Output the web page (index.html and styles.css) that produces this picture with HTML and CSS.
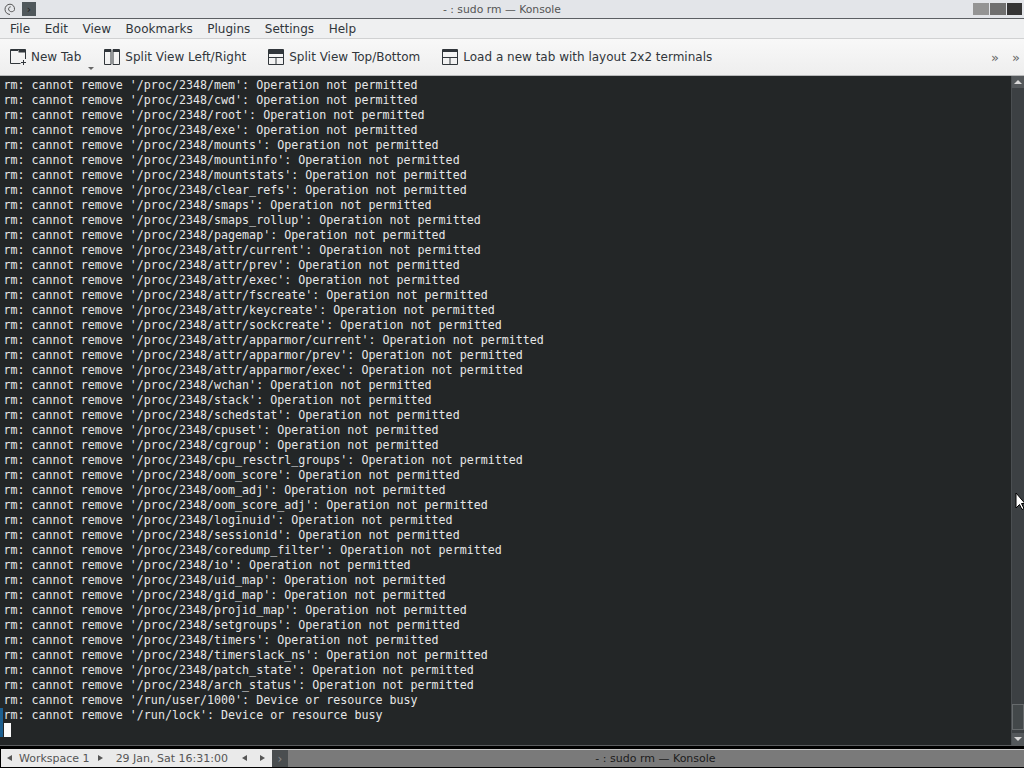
FILE: index.html
```html
<!DOCTYPE html>
<html lang="en">
<head>
<meta charset="utf-8">
<title>- : sudo rm — Konsole</title>
<link rel="stylesheet" href="styles.css">
</head>
<body>
<div class="screen">
  <header class="titlebar">
    <div class="tb-left">
      <svg class="swirl" width="16" height="16" viewBox="0 0 16 16"><path d="M12.500 8.500c.3-3-1.800-5.300-4.500-5.300C5.200 3.200 3 5.500 3 8.300c0 2.800 2 4.900 5 5.200M12.500 8.500c-.2 1.300-1.300 2.100-2.800 2.200-1.900 0-3.100-1.200-3.100-2.700 0-1.200.9-2.200 2.100-2.200" fill="none" stroke="#555" stroke-width="1"/></svg>
      <span class="tb-app"><span class="tb-chev">›</span></span>
    </div>
    <div class="tb-title">- : sudo rm — Konsole</div>
    <div class="tb-btns"><span class="wb wb1"></span><span class="wb wb2"></span><span class="wb wb3"></span></div>
  </header>
  <nav class="menubar">
    <span>File</span><span>Edit</span><span>View</span><span>Bookmarks</span><span>Plugins</span><span>Settings</span><span>Help</span>
  </nav>
  <div class="toolbar">
    <div class="tool tool-new">
      <svg width="18" height="18" viewBox="0 0 18 18"><path d="M11.500 15.500H1.500V1.500H16.500V11M1.500 2.500H9" fill="none" stroke="#31363b"/><path d="M9.500 3h7" stroke="#31363b" stroke-width="3"/><path d="M14.500 12v5M12 14.500h5" stroke="#31363b"/></svg>
      <span>New Tab</span><i class="caret"></i>
    </div>
    <div class="tool tool-lr">
      <svg width="16" height="18" viewBox="0 0 16 18"><path d="M.5 1.500h6.500v15H.5zM9 1.500h6.500v15H9z" fill="none" stroke="#31363b"/><path d="M.5 3H7M9 3h6.500" stroke="#31363b" stroke-width="2"/></svg>
      <span>Split View Left/Right</span>
    </div>
    <div class="tool tool-tb">
      <svg width="16" height="18" viewBox="0 0 16 18"><path d="M.5 1.500h15v15H.5zM.5 9.500h15M8 9.500v7" fill="none" stroke="#31363b"/><path d="M.5 4h15" stroke="#31363b" stroke-width="4"/></svg>
      <span>Split View Top/Bottom</span>
    </div>
    <div class="tool tool-load">
      <svg width="16" height="18" viewBox="0 0 16 18"><path d="M.5 1.500h15v15H.5zM.5 9.500h15M8 9.500v7" fill="none" stroke="#31363b"/><path d="M.5 3h15" stroke="#31363b" stroke-width="2"/></svg>
      <span>Load a new tab with layout 2x2 terminals</span>
    </div>
    <div class="tool-more"><span>»</span><span>»</span></div>
  </div>
  <main class="term-wrap">
    <pre class="term">rm: cannot remove '/proc/2348/mem': Operation not permitted
rm: cannot remove '/proc/2348/cwd': Operation not permitted
rm: cannot remove '/proc/2348/root': Operation not permitted
rm: cannot remove '/proc/2348/exe': Operation not permitted
rm: cannot remove '/proc/2348/mounts': Operation not permitted
rm: cannot remove '/proc/2348/mountinfo': Operation not permitted
rm: cannot remove '/proc/2348/mountstats': Operation not permitted
rm: cannot remove '/proc/2348/clear_refs': Operation not permitted
rm: cannot remove '/proc/2348/smaps': Operation not permitted
rm: cannot remove '/proc/2348/smaps_rollup': Operation not permitted
rm: cannot remove '/proc/2348/pagemap': Operation not permitted
rm: cannot remove '/proc/2348/attr/current': Operation not permitted
rm: cannot remove '/proc/2348/attr/prev': Operation not permitted
rm: cannot remove '/proc/2348/attr/exec': Operation not permitted
rm: cannot remove '/proc/2348/attr/fscreate': Operation not permitted
rm: cannot remove '/proc/2348/attr/keycreate': Operation not permitted
rm: cannot remove '/proc/2348/attr/sockcreate': Operation not permitted
rm: cannot remove '/proc/2348/attr/apparmor/current': Operation not permitted
rm: cannot remove '/proc/2348/attr/apparmor/prev': Operation not permitted
rm: cannot remove '/proc/2348/attr/apparmor/exec': Operation not permitted
rm: cannot remove '/proc/2348/wchan': Operation not permitted
rm: cannot remove '/proc/2348/stack': Operation not permitted
rm: cannot remove '/proc/2348/schedstat': Operation not permitted
rm: cannot remove '/proc/2348/cpuset': Operation not permitted
rm: cannot remove '/proc/2348/cgroup': Operation not permitted
rm: cannot remove '/proc/2348/cpu_resctrl_groups': Operation not permitted
rm: cannot remove '/proc/2348/oom_score': Operation not permitted
rm: cannot remove '/proc/2348/oom_adj': Operation not permitted
rm: cannot remove '/proc/2348/oom_score_adj': Operation not permitted
rm: cannot remove '/proc/2348/loginuid': Operation not permitted
rm: cannot remove '/proc/2348/sessionid': Operation not permitted
rm: cannot remove '/proc/2348/coredump_filter': Operation not permitted
rm: cannot remove '/proc/2348/io': Operation not permitted
rm: cannot remove '/proc/2348/uid_map': Operation not permitted
rm: cannot remove '/proc/2348/gid_map': Operation not permitted
rm: cannot remove '/proc/2348/projid_map': Operation not permitted
rm: cannot remove '/proc/2348/setgroups': Operation not permitted
rm: cannot remove '/proc/2348/timers': Operation not permitted
rm: cannot remove '/proc/2348/timerslack_ns': Operation not permitted
rm: cannot remove '/proc/2348/patch_state': Operation not permitted
rm: cannot remove '/proc/2348/arch_status': Operation not permitted
rm: cannot remove '/run/user/1000': Device or resource busy
rm: cannot remove '/run/lock': Device or resource busy
<span class="cursor"></span></pre>
    <i class="edge-mark"></i>
    <div class="scrollbar">
      <div class="sb-btn"><i class="arrow-up"></i></div>
      <div class="sb-track"><div class="sb-thumb"></div></div>
      <div class="sb-btn"><i class="arrow-down"></i></div>
    </div>
    <svg class="pointer" width="10" height="20" viewBox="0 0 10 20"><path d="M1 1v15l3.500-3.500 2.500 5 2-1-2.500-5H10z" fill="#fff" stroke="#000" stroke-width="1"/></svg>
  </main>
  <footer class="panel">
    <div class="panel-left">
      <i class="tri-l"></i><span class="ws">Workspace 1</span><i class="tri-r"></i>
      <span class="clock">29 Jan, Sat 16:31:00</span>
      <i class="tri-l"></i><i class="tri-r r2"></i>
    </div>
    <div class="panel-task">
      <span class="task-chev">›</span>
      <span class="task-title">- : sudo rm — Konsole</span>
    </div>
  </footer>
</div>
</body>
</html>
```
FILE: styles.css
```css
* { box-sizing: border-box; }
html, body { margin: 0; padding: 0; }
body { width: 1024px; height: 768px; overflow: hidden; background: #000; }
.screen { width: 1024px; height: 768px; display: flex; flex-direction: column; font-family: "DejaVu Sans", sans-serif; color: #31363b; }

.titlebar { height: 19px; background: #e3e5e9; border-bottom: 1px solid #5c5f63; display: flex; align-items: center; position: relative; flex: none; }
.tb-left { display: flex; align-items: center; gap: 4px; padding-left: 2px; }
.swirl { display: block; }
.tb-app { width: 14px; height: 14px; background: #50585c; display: flex; align-items: center; justify-content: center; color: #222; font-size: 11px; line-height: 1; }
.tb-title { position: absolute; left: 0; right: 20px; top: 3px; text-align: center; font-size: 10.8px; line-height: 14px; color: #555; }
.tb-btns { margin-left: auto; display: flex; gap: 1px; padding-right: 2px; height: 12px; margin-top: -1px; }
.wb { display: block; width: 16px; height: 12px; }
.wb1 { background: #949494; }
.wb2 { background: #6f6f6f; }
.wb3 { background: #353535; width: 15px; }

.menubar { height: 20px; background: #eff0f1; border-bottom: 1px solid #d0d1d2; display: flex; align-items: center; flex: none; font-size: 12px; padding-left: 10px; gap: 14.6px; }
.toolbar { height: 37px; background: linear-gradient(#f8f8f8, #eeeeee); border-bottom: 1px solid #b8b9ba; display: flex; align-items: center; flex: none; font-size: 12px; }
.tool { display: flex; align-items: center; gap: 5px; position: relative; }
.tool svg { flex: none; display: block; }
.tool-new { margin-left: 9px; gap: 4px; }
.tool-lr { margin-left: 23px; }
.tool-tb { margin-left: 22px; }
.tool-load { margin-left: 22px; }
.caret { position: absolute; right: -13px; bottom: -4px; width: 0; height: 0; border-left: 3px solid transparent; border-right: 3px solid transparent; border-top: 3px solid #666; }
.tool-more { margin-left: auto; display: flex; gap: 13px; padding-right: 4px; color: #666; font-size: 13px; }

.term-wrap { flex: 1; min-height: 0; position: relative; display: flex; background: #232627; border-bottom: 1px solid #5a5c5e; }
.term { margin: 0; flex: 1; min-width: 0; padding: 2px 0 0 3.5px; font-family: "DejaVu Sans Mono", monospace; font-size: 11.67px; line-height: 15px; color: #e6e7e8; overflow: hidden; }
.cursor { display: inline-block; width: 7px; height: 14px; background: #fcfcfc; vertical-align: top; margin-left: .5px; }
.edge-mark { position: absolute; left: 0; top: 632px; width: 3px; height: 29px; background: #1d5f8f; }
.scrollbar { width: 13px; flex: none; background: #3c4043; display: flex; flex-direction: column; border-left: 1px solid #4a4e51; }
.sb-btn { height: 12px; background: #54585b; display: flex; align-items: center; justify-content: center; flex: none; }
.sb-track { flex: 1; display: flex; flex-direction: column; justify-content: flex-end; padding-bottom: 3px; }
.sb-thumb { height: 26px; background: #43484a; border: 1px solid #666a6c; }
.arrow-up, .arrow-down { width: 0; height: 0; border-left: 4px solid transparent; border-right: 4px solid transparent; }
.arrow-up { border-bottom: 4px solid #d8d8d8; }
.arrow-down { border-top: 4px solid #d8d8d8; }
.pointer { position: absolute; left: 1015px; top: 416px; }

.panel { height: 22px; flex: none; background: #000; display: flex; padding: 3px 0 1px 1px; font-size: 11px; color: #555; }
.panel-left { width: 271px; background: #eaeaea; display: flex; align-items: center; flex: none; padding-left: 6px; }
.tri-l, .tri-r { display: block; width: 0; height: 0; border-top: 3.5px solid transparent; border-bottom: 3.5px solid transparent; flex: none; }
.tri-l { border-right: 5px solid #555; }
.tri-r { border-left: 5px solid #555; }
.ws { margin: 0 8px 0 7px; }
.clock { margin: 0 14px 0 13px; }
.r2 { margin-left: 13px; }
.panel-task { flex: 1; background: #7a7a7a; display: flex; align-items: center; position: relative; border-top: 1px solid #c8c8c8; }
.task-chev { width: 16px; height: 100%; background: #4a4e50; color: #888; display: flex; align-items: center; justify-content: center; font-size: 12px; flex: none; }
.task-title { position: absolute; left: 15px; right: 0; text-align: center; color: #1c1c1c; }
```
